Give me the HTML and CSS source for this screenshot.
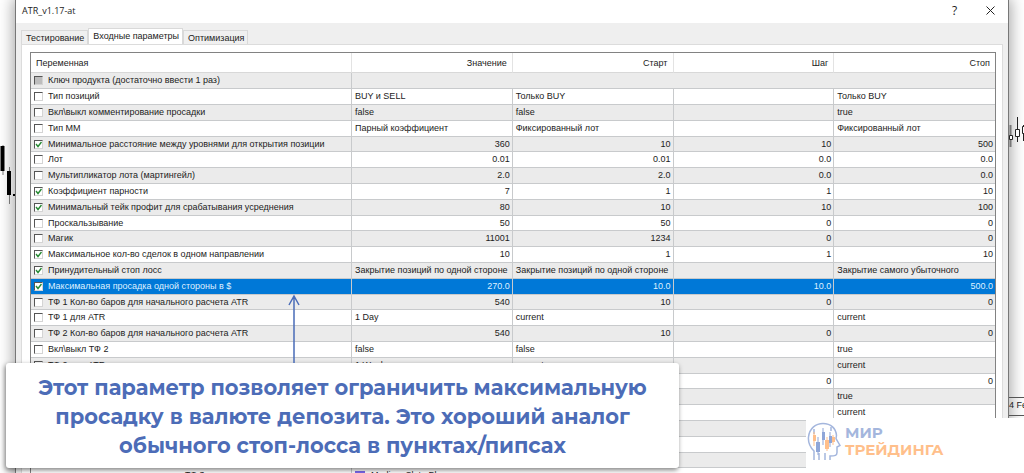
FILE: index.html
```html
<!DOCTYPE html>
<html lang="ru">
<head>
<meta charset="utf-8">
<title>ATR_v1.17-at</title>
<link rel="stylesheet" href="styles.css">
</head>
<body>
<svg class="chart chart-left" width="15" height="64" viewBox="0 0 15 64" aria-hidden="true">
  <path d="M3 4V34M9.500 26V63" stroke="#777"/>
  <path d="M0.500 5h4v25h-4zM7 30h4v24H7zM13 53h2v2h-2z" fill="#000"/>
</svg>
<svg class="chart chart-right" width="15" height="32" viewBox="0 0 15 32" aria-hidden="true">
  <path d="M1.500 8v22" stroke="#777" stroke-width="2"/>
  <path d="M8.500 0v25M14.500 8v16" stroke="#222"/>
  <path d="M0.500 18.500h3v4h-3zM6.500 12.500h4v7h-4zM13.500 9.500h3v7h-3z" fill="#fff" stroke="#222"/>
</svg>
<div class="chart-axis">4 Feb</div>

<main class="dialog">
  <header class="titlebar">
    <h1>ATR_v1.17-at</h1>
    <button class="title-btn" type="button" aria-label="Справка">?</button>
    <button class="title-btn" type="button" aria-label="Закрыть"><svg width="9" height="9" viewBox="0 0 9 9"><path d="M0.500 0.500l8 8M8.500 0.500l-8 8" stroke="#222" fill="none"/></svg></button>
  </header>
  <nav class="tabs" role="tablist">
    <button class="tab" type="button" role="tab">Тестирование</button>
    <button class="tab active" type="button" role="tab" aria-selected="true">Входные параметры</button>
    <button class="tab" type="button" role="tab">Оптимизация</button>
  </nav>
  <section class="panel">
    <table class="params">
      <colgroup><col class="name-col"><col><col><col><col></colgroup>
      <thead>
        <tr><th class="name">Переменная</th><th>Значение</th><th>Старт</th><th>Шаг</th><th>Стоп</th></tr>
      </thead>
      <tbody>
        <tr><td><label><input type="checkbox" disabled>Ключ продукта (достаточно ввести 1 раз)</label></td><td colspan="4"></td></tr>
        <tr><td><label><input type="checkbox">Тип позиций</label></td><td>BUY и SELL</td><td>Только BUY</td><td></td><td>Только BUY</td></tr>
        <tr><td><label><input type="checkbox">Вкл\выкл комментирование просадки</label></td><td>false</td><td>false</td><td></td><td>true</td></tr>
        <tr><td><label><input type="checkbox">Тип ММ</label></td><td>Парный коэффициент</td><td>Фиксированный лот</td><td></td><td>Фиксированный лот</td></tr>
        <tr class="num"><td><label><input type="checkbox" checked>Минимальное расстояние между уровнями для открытия позиции</label></td><td>360</td><td>10</td><td>10</td><td>500</td></tr>
        <tr class="num"><td><label><input type="checkbox">Лот</label></td><td>0.01</td><td>0.01</td><td>0.0</td><td>0.0</td></tr>
        <tr class="num"><td><label><input type="checkbox">Мультипликатор лота (мартингейл)</label></td><td>2.0</td><td>2.0</td><td>0.0</td><td>0.0</td></tr>
        <tr class="num"><td><label><input type="checkbox" checked>Коэффициент парности</label></td><td>7</td><td>1</td><td>1</td><td>10</td></tr>
        <tr class="num"><td><label><input type="checkbox" checked>Минимальный тейк профит для срабатывания усреднения</label></td><td>80</td><td>10</td><td>10</td><td>100</td></tr>
        <tr class="num"><td><label><input type="checkbox">Проскальзывание</label></td><td>50</td><td>50</td><td>0</td><td>0</td></tr>
        <tr class="num"><td><label><input type="checkbox">Магик</label></td><td>11001</td><td>1234</td><td>0</td><td>0</td></tr>
        <tr class="num"><td><label><input type="checkbox" checked>Максимальное кол-во сделок в одном направлении</label></td><td>10</td><td>1</td><td>1</td><td>10</td></tr>
        <tr><td><label><input type="checkbox" checked>Принудительный стоп лосс</label></td><td>Закрытие позиций по одной стороне</td><td>Закрытие позиций по одной стороне</td><td></td><td>Закрытие самого убыточного</td></tr>
        <tr class="num selected"><td><label><input type="checkbox" checked>Максимальная просадка одной стороны в $</label></td><td>270.0</td><td>10.0</td><td>10.0</td><td>500.0</td></tr>
        <tr class="num"><td><label><input type="checkbox">ТФ 1 Кол-во баров для начального расчета ATR</label></td><td>540</td><td>10</td><td>0</td><td>0</td></tr>
        <tr><td><label><input type="checkbox">ТФ 1 для ATR</label></td><td>1 Day</td><td>current</td><td></td><td>current</td></tr>
        <tr class="num"><td><label><input type="checkbox">ТФ 2 Кол-во баров для начального расчета ATR</label></td><td>540</td><td>10</td><td>0</td><td>0</td></tr>
        <tr><td><label><input type="checkbox">Вкл\выкл ТФ 2</label></td><td>false</td><td>false</td><td></td><td>true</td></tr>
        <tr><td><label><input type="checkbox">ТФ 2 для ATR</label></td><td>1 Week</td><td>current</td><td></td><td>current</td></tr>
        <tr class="num"><td></td><td></td><td></td><td>0</td><td>0</td></tr>
        <tr><td></td><td></td><td></td><td></td><td>true</td></tr>
        <tr><td></td><td></td><td></td><td></td><td>current</td></tr>
        <tr><td></td><td colspan="4"></td></tr>
        <tr><td></td><td colspan="4"></td></tr>
        <tr><td></td><td colspan="4"></td></tr>
        <tr><td class="group">ТФ 3</td><td colspan="4"><span class="swatch"></span>Medium Slate Blue</td></tr>
      </tbody>
    </table>
  </section>
</main>

<aside class="callout">
  <svg class="arrow" width="12" height="69" viewBox="0 0 12 69" aria-hidden="true"><path d="M6 69V2M1 11L6 2l5 9" fill="none" stroke="#4a6cb8" stroke-width="1.500"/></svg>
  <p>Этот параметр позволяет ограничить максимальную<br>просадку в валюте депозита. Это хороший аналог<br>обычного стоп-лосса в пунктах/пипсах</p>
</aside>

<div class="brand">
  <svg width="34" height="40" viewBox="0 0 34 40" aria-hidden="true">
    <g fill="none" stroke="#a4b6dd" stroke-width="1.500">
      <path d="M7 38V29C3 25 1 20 1.500 15 2.500 6 9 1.500 16 1.500c8 0 13 5 13.500 12l-.5 3 4 7-3 1.500v5.500c0 3-2 3.500-7 3.500v4"/>
      <path d="M12 38v-7M18 38v-7M7 12V7M24 9V5"/>
    </g>
    <path d="M7 10v14M20 15v14M26 13v10" stroke="#ffbf8b"/>
    <path d="M6 13h3v6H6zM18 18h4v9h-4zM25 15h3v5h-3z" fill="#ffbf8b"/>
    <path d="M11 15v18M16 6v17M23 10v15" stroke="#8fa6d8"/>
    <path d="M9 20h4v10H9zM15 10h3v8h-3zM22 14h3v7h-3z" fill="#8fa6d8"/>
  </svg>
  <div class="brand-name"><span>МИР</span><span class="accent">ТРЕЙДИНГА</span></div>
</div>
</body>
</html>
```
FILE: styles.css
```css
* { box-sizing: border-box; }
body {
  margin: 0;
  position: relative;
  height: 100vh;
  overflow: hidden;
  background: #fff;
  color: #1c1c22;
  font-family: "Liberation Sans", Arial, sans-serif;
  font-size: 9px;
}
button { font: inherit; color: inherit; padding: 0; }

.chart { position: absolute; z-index: 1; }
.chart-left { left: 0; top: 141px; }
.chart-right { right: 0; top: 117px; }
.chart-axis {
  position: absolute;
  z-index: 1;
  top: 397px;
  left: calc(100% - 15px);
  width: 40px;
  height: 19px;
  line-height: 15px;
  border: solid #555;
  border-width: 1px 0;
}

.dialog {
  margin: 0 15px;
  background: #efefef;
  border: solid #777;
  border-width: 0 1px;
  box-shadow: 0 0 14px 2px rgba(0, 0, 0, .35);
}
.titlebar {
  display: flex;
  align-items: center;
  height: 23px;
  padding: 0 12px 2px 6px;
  background: #fff;
}
.titlebar h1 {
  flex: 1;
  margin: 0;
  font: 9px "Open Sans", sans-serif;
}
.title-btn {
  display: grid;
  place-items: center;
  width: 11px;
  margin-left: 25px;
  border: 0;
  background: none;
  font: 12px "Open Sans", sans-serif;
}
.tabs {
  display: flex;
  align-items: flex-end;
  height: 21px;
  padding: 0 5px;
}
.tab {
  height: 14px;
  padding: 0 3px 0 4px;
  border: 1px solid #d9d9d9;
  border-bottom: 0;
  background: #f0f0f0;
}
.tab.active {
  height: 16px;
  background: #fff;
  padding-bottom: 2px;
}
.panel {
  margin: 0 5px;
  padding: 7px 6px 0 8px;
  background: #fff;
  border: 1px solid #dcdcdc;
}
.params {
  width: 100%;
  table-layout: fixed;
  border-collapse: separate;
  border-spacing: 0;
  border: solid #828282;
  border-width: 1px 1px 0;
}
.name-col { width: 33.3%; }
.params th {
  height: 20px;
  padding: 0 5px;
  border-right: 1px solid #e3e3e3;
  border-bottom: 1px solid #d8d8d8;
  font-weight: normal;
  text-align: right;
}
.params th.name { text-align: left; }
.params td {
  height: 16px;
  padding: 0 2px 0 3px;
  border-right: 1px solid #c8cacc;
  border-bottom: 1px solid #c8cacc;
  line-height: 14px;
  white-space: nowrap;
  vertical-align: top;
  overflow: hidden;
}
.params tr > :last-child { border-right: 0; }
.params tbody tr:nth-child(5n) td { height: 15px; }
.params tbody tr:nth-child(odd) { background: #ebebeb; }
.params .num td { text-align: right; }
.params .num td:first-child { text-align: left; }
.params tbody tr.selected { background: #0078d7; color: #dff0ff; }
.params label { display: flex; align-items: center; gap: 5px; }
.params td.group { padding-left: 154px; }
.params input {
  appearance: none;
  width: 9px;
  height: 9px;
  margin: 0;
  background: #fff;
  border: 1px solid #d4d4d4;
  border-top-color: #555;
  border-left-color: #555;
}
.params input:disabled { background: #bdbdbd; }
.params input:checked {
  background: #fff url("data:image/svg+xml,%3Csvg xmlns='http://www.w3.org/2000/svg' viewBox='0 0 7 7'%3E%3Cpath d='M1 3l2 2.500L6.500 1' fill='none' stroke='%23258a32' stroke-width='1.400'/%3E%3C/svg%3E") center / 7px 7px no-repeat;
}
.swatch {
  display: inline-block;
  width: 10px;
  height: 10px;
  margin-right: 6px;
  background: #7b68ee;
  vertical-align: middle;
}

.callout {
  position: absolute;
  z-index: 3;
  left: 6px;
  top: 363px;
  width: 673px;
  padding: 10px 0 8px;
  border-radius: 3px;
  background: #fff;
  box-shadow: -1px 2px 5px rgba(0, 0, 0, .5);
}
.callout p {
  margin: 0;
  color: #4c6cb7;
  font: 700 21px/29px Montserrat, Inter, sans-serif;
  text-align: center;
  white-space: nowrap;
}
.arrow { position: absolute; left: 282px; bottom: 100%; }

.brand {
  position: absolute;
  z-index: 2;
  right: 0;
  bottom: 0;
  width: 218px;
  height: 55px;
  display: flex;
  gap: 4px;
  padding: 4px 0 0 1px;
  background: #fff;
}
.brand-name {
  display: flex;
  flex-direction: column;
  padding-top: 2px;
  color: #a4b6dd;
  font: 700 15px/17px Montserrat, Inter, sans-serif;
}
.accent { color: #ffbf8b; }
```
